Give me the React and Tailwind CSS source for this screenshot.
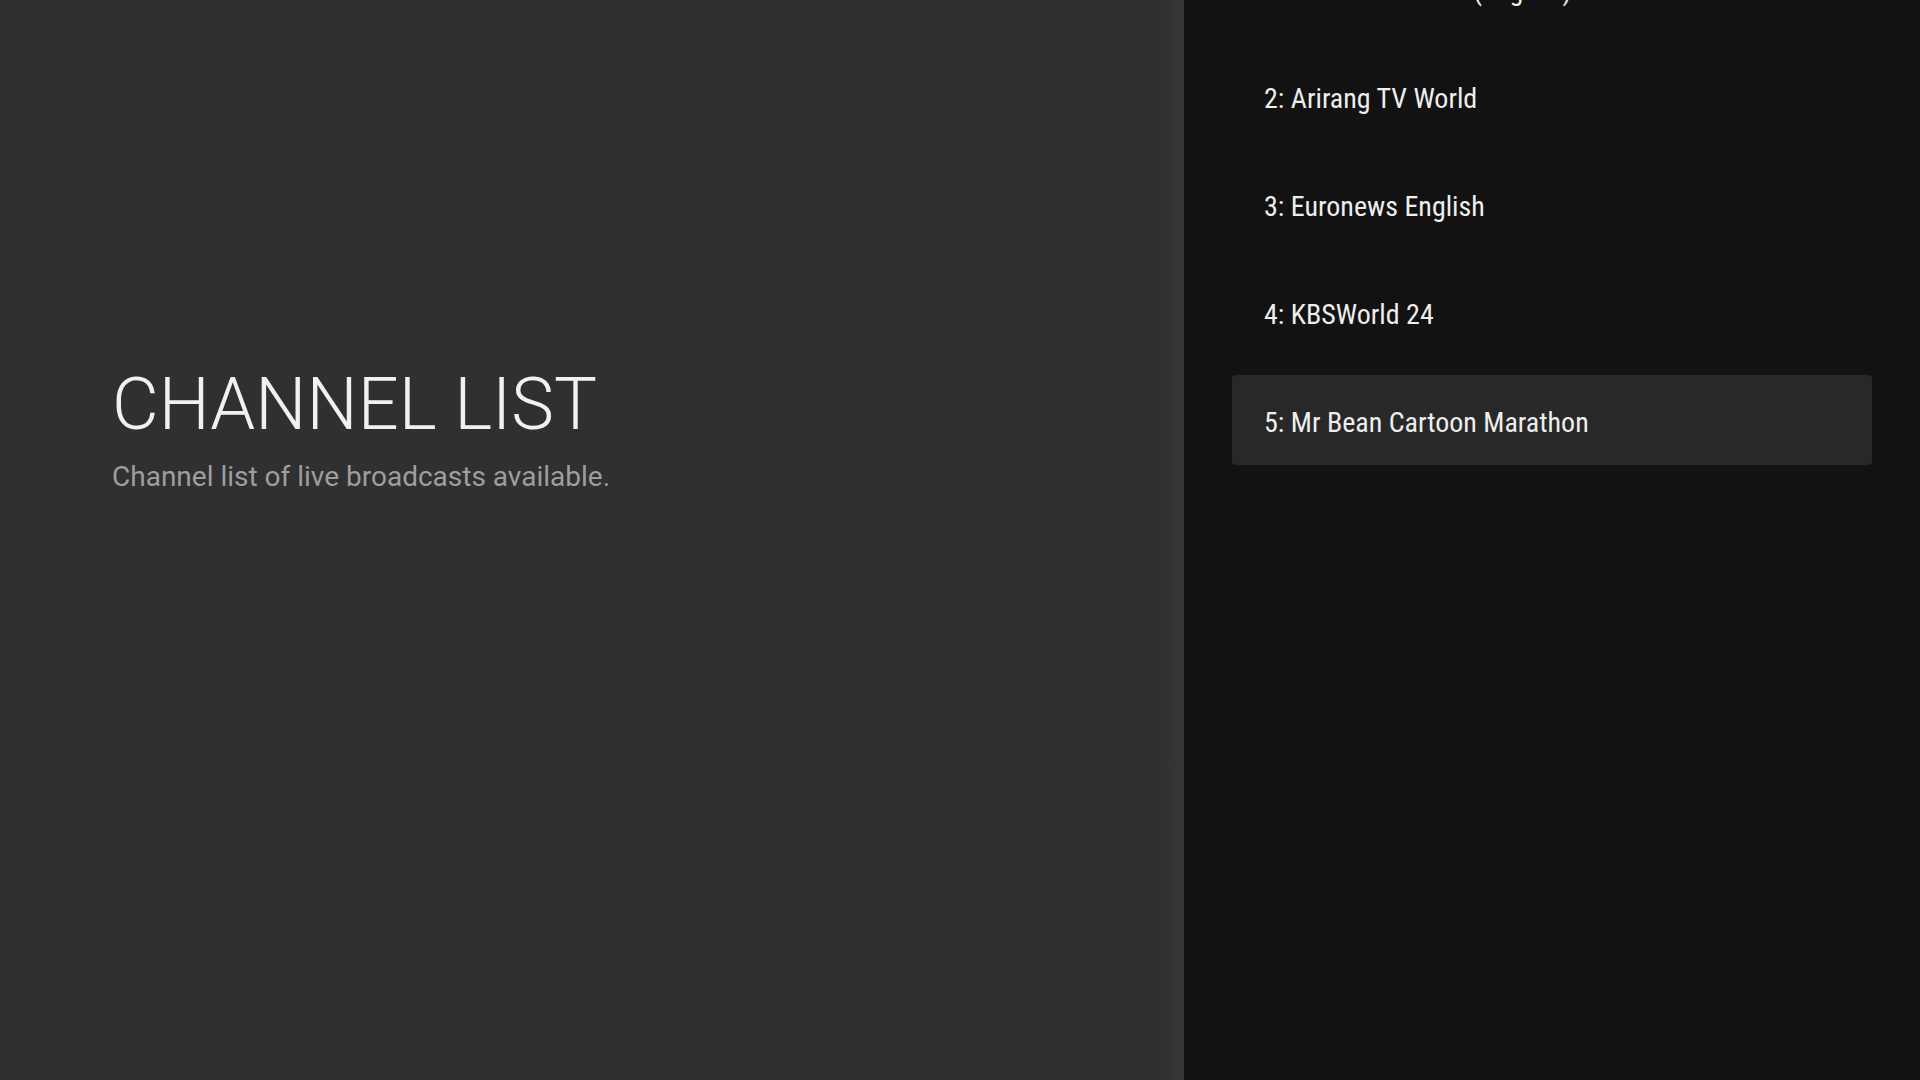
import { useState } from 'react'

const channels = [
    '1: France 24 News (English)',
    '2: Arirang TV World',
    '3: Euronews English',
    '4: KBSWorld 24',
    '5: Mr Bean Cartoon Marathon',
]

const App = () => {
    const [selected] = useState(4)

    return (
        <div className="w-[1920px] h-[1080px] flex overflow-hidden bg-[#121212]">
            {/* Info panel */}
            <div className="relative w-[1184px] h-full bg-[#303030] pl-[112px] pt-[369px]">
                <h1 className="text-[72px] leading-none font-light text-[#f1f1f1] font-['Roboto',sans-serif]">
                    CHANNEL LIST
                </h1>
                <p className="mt-[16px] text-[28px] leading-[40px] text-[#9e9e9e] font-['Roboto',sans-serif]">
                    Channel list of live broadcasts available.
                </p>
                <div className="absolute right-0 top-0 h-full w-[22px] bg-gradient-to-r from-transparent to-white/[0.03]" />
            </div>

            {/* Channel list */}
            <div className="flex-1 h-full px-[48px] overflow-hidden">
                <ul className="mt-[-57px] flex flex-col gap-[18px]">
                    {channels.map((name, i) => (
                        <li
                            key={name}
                            className={`h-[90px] flex items-center px-[32px] pt-[5px] rounded-[4px] text-[28px] text-[#eeeeee] font-['Roboto_Condensed','Liberation_Sans_Narrow',sans-serif] ${i === selected ? 'bg-[#282828]' : ''}`}
                        >
                            {name}
                        </li>
                    ))}
                </ul>
            </div>
        </div>
    )
}

export default App
